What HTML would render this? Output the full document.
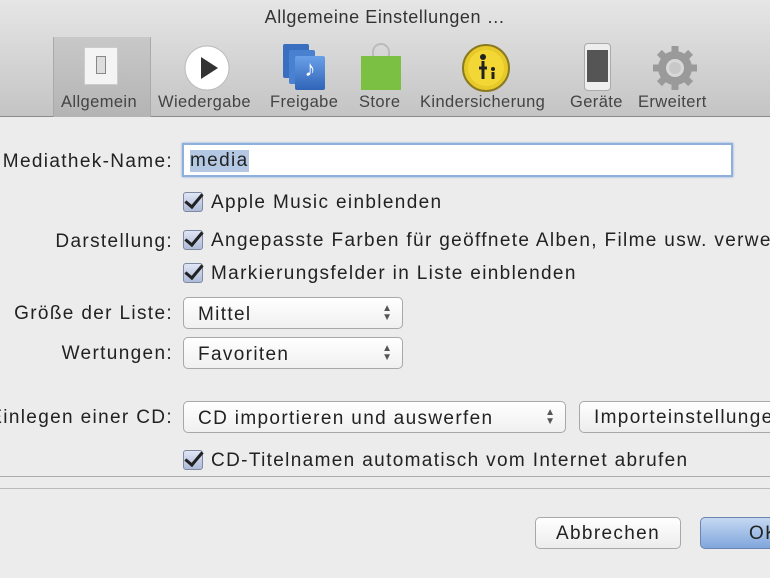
<!DOCTYPE html>
<html><head><style>
*{margin:0;padding:0;box-sizing:border-box}
html,body{overflow:hidden}
body{width:770px;height:578px;background:#ececec;font-family:"Liberation Sans",sans-serif;color:#222;position:relative}
.tb{position:absolute;left:0;top:0;width:770px;height:117px;background:linear-gradient(#e6e6e6,#c4c4c4);border-bottom:1px solid #8a8a8a}
.title{position:absolute;top:7px;width:770px;text-align:center;font-size:18px;color:#333;letter-spacing:.6px}
.sel{position:absolute;left:53px;top:37px;width:98px;height:80px;background:linear-gradient(#c8c8c8,#b4b4b4);border-left:1px solid #aaa;border-right:1px solid #aaa}
.tl{position:absolute;top:93px;font-size:16.5px;color:#444;letter-spacing:.4px;white-space:nowrap}
.ab{position:absolute}
.lbl{position:absolute;font-size:19px;text-align:right;white-space:nowrap;letter-spacing:1.35px}
.txt{position:absolute;font-size:19px;white-space:nowrap;letter-spacing:1.35px}
.cb{position:absolute;width:20px;height:20px;border:1px solid #7f8aa0;border-radius:3px;background:linear-gradient(#dfe6f5,#aebbd8)}
.cb:after{content:"";position:absolute;left:5px;top:-3px;width:7px;height:15px;border-right:3px solid #222;border-bottom:3px solid #222;transform:rotate(40deg)}
.pop{position:absolute;height:32px;border:1px solid #a8a8a8;border-radius:5px;background:linear-gradient(#fff,#f0f0f0);font-size:19px;letter-spacing:1.35px;padding:6px 0 0 14px;white-space:nowrap}
.pop .ar{position:absolute;right:10px;top:6px;font-size:10px;line-height:9px;color:#555;letter-spacing:0}
.btn{position:absolute;height:32px;border:1px solid #a8a8a8;border-radius:5px;background:linear-gradient(#fff,#ececec);font-size:19px;letter-spacing:1.35px;text-align:center;padding-top:5px;white-space:nowrap}
</style></head><body>
<div class="tb">
<div class="title">Allgemeine Einstellungen …</div>
<div class="sel"></div>
<div class="ab" style="left:84px;top:47px;width:34px;height:38px;background:#f4f4f4;border:1px solid #ccc"><div style="margin:8px auto;width:10px;height:18px;border:1px solid #888;background:#ddd"></div></div>
<svg class="ab" style="left:184px;top:45px" width="46" height="46"><circle cx="23" cy="23" r="22" fill="#fff" stroke="#bbb"/><path d="M17 12 L34 23 L17 34Z" fill="#333"/></svg>
<div class="ab" style="left:283px;top:44px;width:26px;height:34px;background:#3a6fc0;border-radius:2px"></div>
<div class="ab" style="left:289px;top:50px;width:26px;height:34px;background:#4a80d0;border-radius:2px"></div>
<div class="ab" style="left:295px;top:56px;width:30px;height:34px;background:linear-gradient(#6aa0e8,#2f64b8);border-radius:2px;color:#fff;font-size:22px;text-align:center">♪</div>
<svg class="ab" style="left:360px;top:42px" width="42" height="48"><path d="M13 16 V10 a8 8 0 0 1 16 0 V16" fill="none" stroke="#bbb" stroke-width="2"/><rect x="1" y="14" width="40" height="34" fill="#7cc043"/></svg>
<svg class="ab" style="left:462px;top:44px" width="48" height="48"><circle cx="24" cy="24" r="23" fill="#e8c92a" stroke="#8a7a20" stroke-width="2"/><circle cx="24" cy="24" r="18" fill="#f3d835"/><circle cx="21" cy="13" r="3" fill="#222"/><path d="M21 17 v18 M17 24 h8 M31 28 v7" stroke="#222" stroke-width="3"/><circle cx="31" cy="25" r="2" fill="#222"/></svg>
<div class="ab" style="left:584px;top:43px;width:27px;height:48px;background:#eee;border:1px solid #aaa;border-radius:4px"><div style="margin:6px 2px;height:32px;background:#555"></div></div>
<svg class="ab" style="left:651px;top:44px" width="48" height="48"><g fill="#9a9a9a"><circle cx="24" cy="24" r="17"/><g stroke="#9a9a9a" stroke-width="7"><path d="M24 2v44M2 24h44M8.4 8.4l31.2 31.2M39.6 8.4L8.4 39.6"/></g></g><circle cx="24" cy="24" r="9" fill="#d8d8d8"/><circle cx="24" cy="24" r="6" fill="#c8c8c8"/></svg>
<div class="tl" style="left:61px">Allgemein</div>
<div class="tl" style="left:158px">Wiedergabe</div>
<div class="tl" style="left:270px">Freigabe</div>
<div class="tl" style="left:359px">Store</div>
<div class="tl" style="left:420px">Kindersicherung</div>
<div class="tl" style="left:570px">Geräte</div>
<div class="tl" style="left:638px">Erweitert</div>
</div>

<div class="lbl" style="right:597px;top:151px">Mediathek-Name:</div>
<div class="ab" style="left:182px;top:143px;width:551px;height:34px;background:#fff;border:2px solid #8fb0dc;box-shadow:0 0 2px #7aa0d8"><span style="position:absolute;left:6px;top:5px;font-size:19px;letter-spacing:1.35px;background:#b4c8e4">media</span></div>

<div class="cb" style="left:183px;top:192px"></div><div class="txt" style="left:211px;top:192px">Apple Music einblenden</div>
<div class="lbl" style="right:597px;top:231px">Darstellung:</div>
<div class="cb" style="left:183px;top:230px"></div><div class="txt" style="left:211px;top:230px">Angepasste Farben für geöffnete Alben, Filme usw. verwenden</div>
<div class="cb" style="left:183px;top:263px"></div><div class="txt" style="left:211px;top:263px">Markierungsfelder in Liste einblenden</div>

<div class="lbl" style="right:597px;top:303px">Größe der Liste:</div>
<div class="pop" style="left:183px;top:297px;width:220px">Mittel<div class="ar">▲<br>▼</div></div>
<div class="lbl" style="right:597px;top:343px">Wertungen:</div>
<div class="pop" style="left:183px;top:337px;width:220px">Favoriten<div class="ar">▲<br>▼</div></div>

<div class="lbl" style="right:597px;top:407px">Einlegen einer CD:</div>
<div class="pop" style="left:183px;top:401px;width:383px">CD importieren und auswerfen<div class="ar">▲<br>▼</div></div>
<div class="btn" style="left:579px;top:401px;width:240px;text-align:left;padding-left:14px">Importeinstellungen …</div>
<div class="cb" style="left:183px;top:450px"></div><div class="txt" style="left:211px;top:450px">CD-Titelnamen automatisch vom Internet abrufen</div>

<div class="ab" style="left:0;top:476px;width:770px;height:1px;background:#aaa"></div>
<div class="ab" style="left:0;top:488px;width:770px;height:1px;background:#bbb"></div>

<div class="btn" style="left:535px;top:517px;width:146px">Abbrechen</div>
<div class="btn" style="left:700px;top:517px;width:110px;background:linear-gradient(#c5d8f2,#7fa6dc);border-color:#6a86b0;text-align:left;padding-left:48px">OK</div>
</body></html>
